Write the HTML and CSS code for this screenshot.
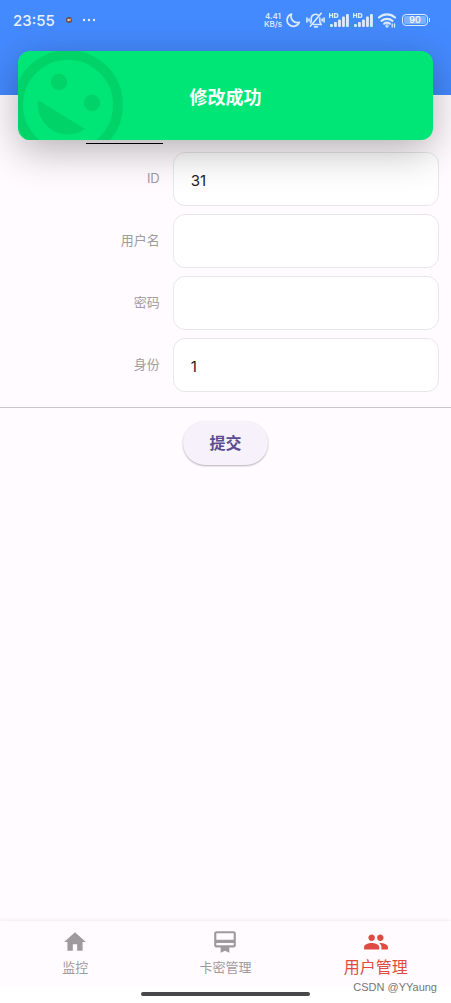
FILE: index.html
```html
<!DOCTYPE html>
<html lang="zh-CN">
<head>
<meta charset="utf-8">
<meta name="viewport" content="width=device-width, initial-scale=1">
<title>用户管理</title>
<link rel="stylesheet" href="styles.css">
</head>
<body>
<div class="app">
  <header class="app-header">
    <div class="status-bar">
      <time class="clock">23:55</time>
      <svg class="app-dot" width="8" height="8" viewBox="0 0 8 8"><circle cx="4" cy="4" r="3" fill="#6b4a4f"/><circle cx="3.6" cy="4" r="1.3" fill="#f0cfc0"/><path d="M5 2l1.500 1.500-1.500 2z" fill="#e8913a"/></svg>
      <svg class="more" width="14" height="4" viewBox="0 0 14 4" fill="#e8f2ff"><circle cx="2" cy="2" r="1.200"/><circle cx="7" cy="2" r="1.200"/><circle cx="12" cy="2" r="1.200"/></svg>
      <div class="status-icons">
        <div class="speed"><span>4.41</span><span>KB/s</span></div>
        <svg width="16" height="18" viewBox="0 0 16 18" fill="none" stroke="#dcecff" stroke-width="1.700" stroke-linejoin="round"><path d="M5.500 3A6.300 6.300 0 1 0 13.300 11.200 6.200 6.200 0 0 1 5.500 3z"/></svg>
        <svg width="19" height="18" viewBox="0 0 20 18" fill="none" stroke="#dcecff" stroke-width="1.700" stroke-linecap="round" stroke-linejoin="round"><path d="M14.500 7v4l1.500 2.800H8M4.800 12l.7-1.500V7.500a4.600 4.600 0 0 1 7.400-3.600M9 16.200h3M16 2L4.500 15.500M1 7v4M3.200 8v2M19 7v4M17 8v2"/></svg>
        <svg width="20" height="18" viewBox="0 0 20 18" fill="#dcecff"><path d="M0 2h1.200v1.800h1.800V2h1.200v5H3V5H1.200v2H0zM5 2h2q2.500 0 2.500 2.500T7 7H5zm1.200 1.200v2.600H7q1.200 0 1.200-1.300T7 3.200z" fill-rule="evenodd"/><rect x="1" y="13" width="2.900" height="3" rx="1"/><rect x="5" y="11" width="2.900" height="5" rx="1"/><rect x="9" y="8.500" width="2.900" height="7.500" rx="1"/><rect x="13" y="5.500" width="2.900" height="10.500" rx="1"/><rect x="17" y="3" width="2.900" height="13" rx="1"/></svg>
        <svg width="20" height="18" viewBox="0 0 20 18" fill="#dcecff"><path d="M0 2h1.200v1.800h1.800V2h1.200v5H3V5H1.200v2H0zM5 2h2q2.500 0 2.500 2.500T7 7H5zm1.200 1.200v2.600H7q1.200 0 1.200-1.300T7 3.200z" fill-rule="evenodd"/><rect x="1" y="13" width="2.900" height="3" rx="1"/><rect x="5" y="11" width="2.900" height="5" rx="1"/><rect x="9" y="8.500" width="2.900" height="7.500" rx="1"/><rect x="13" y="5.500" width="2.900" height="10.500" rx="1"/><rect x="17" y="3" width="2.900" height="13" rx="1"/></svg>
        <svg width="20" height="18" viewBox="0 0 20 18" fill="none" stroke="#dcecff" stroke-width="2.200" stroke-linecap="round"><path d="M2 6.500a12 12 0 0 1 16 0M4.500 9.800a8.500 8.500 0 0 1 11 0M7.200 12.700a4.500 4.500 0 0 1 5.600 0"/><circle cx="10" cy="15" r=".6"/><path d="M15.200 13v3M17.500 13v3" stroke-width="1.300"/></svg>
        <div class="battery"><span>90</span></div>
      </div>
    </div>
  </header>

  <main class="content">
    <div class="tab-strip"><span class="tab-indicator"></span></div>
    <form class="user-form">
      <div class="fields">
        <div class="field"><label for="uid">ID</label><input id="uid" type="text" value="31"></div>
        <div class="field"><label for="username">用户名</label><input id="username" type="text"></div>
        <div class="field"><label for="password">密码</label><input id="password" type="password"></div>
        <div class="field"><label for="role">身份</label><input id="role" type="text" value="1"></div>
      </div>
      <div class="actions"><button class="submit" type="button">提交</button></div>
    </form>
  </main>

  <nav class="bottom-nav">
    <a class="nav-item" href="#monitor">
      <svg width="26" height="26" viewBox="0 0 24 24" fill="currentColor"><path d="M10 20v-6h4v6h5v-8h3L12 3 2 12h3v8z"/></svg>
      <span>监控</span>
    </a>
    <a class="nav-item" href="#cards">
      <svg width="26" height="26" viewBox="0 0 24 24" fill="currentColor"><path d="M20 2H4c-1.110 0-2 .89-2 2v11c0 1.110.89 2 2 2h4v5l4-2 4 2v-5h4c1.110 0 2-.89 2-2V4c0-1.110-.89-2-2-2zm0 13H4v-2h16v2zm0-5H4V4h16v6z"/></svg>
      <span>卡密管理</span>
    </a>
    <a class="nav-item active" href="#users">
      <svg width="26" height="26" viewBox="0 0 24 24" fill="currentColor"><path d="M16 11c1.660 0 2.990-1.340 2.990-3S17.660 5 16 5s-3 1.340-3 3 1.340 3 3 3zm-8 0c1.660 0 2.990-1.340 2.990-3S9.660 5 8 5 5 6.340 5 8s1.340 3 3 3zm0 2c-2.330 0-7 1.170-7 3.500V19h14v-2.500c0-2.330-4.670-3.500-7-3.500zm8 0c-.29 0-.62.02-.97.05 1.160.84 1.970 1.970 1.970 3.450V19h6v-2.500c0-2.330-4.670-3.500-7-3.500z"/></svg>
      <span>用户管理</span>
    </a>
  </nav>
  <div class="gesture-area"><span class="gesture-bar"></span></div>

  <div class="toast" role="status">
    <svg class="toast-face" width="110" height="89" viewBox="0 0 110 89" fill="#00d468"><circle cx="50" cy="54" r="50" fill="none" stroke="#00d468" stroke-width="10"/><circle cx="41" cy="31" r="8.300"/><circle cx="74" cy="52" r="8.300"/><path d="M20 49L67 78A30 30 0 0 1 20 49z"/></svg>
    <span>修改成功</span>
  </div>
  <span class="watermark">CSDN @YYaung</span>
</div>
</body>
</html>
```

FILE: styles.css
```css
* { box-sizing: border-box; }

body {
  margin: 0;
  font-family: Inter, "Noto Sans CJK SC", sans-serif;
  background: #fffbff;
}

.app {
  position: relative;
  min-height: 100vh;
  display: flex;
  flex-direction: column;
}

.app-header {
  height: 95px;
  background: #448aff;
}

.status-bar {
  display: flex;
  align-items: center;
  height: 40px;
  padding: 0 23px 0 13px;
  color: #e8f2ff;
}

.clock {
  font-size: 15px;
  font-weight: 500;
}

.app-dot { margin-left: 10px; }
.more { margin-left: 9px; }

.status-icons {
  display: flex;
  align-items: center;
  gap: 4px;
  margin-left: auto;
}

.speed {
  display: flex;
  flex-direction: column;
  align-items: center;
  font-size: 8px;
  font-weight: 500;
  line-height: 8px;
}

.battery {
  position: relative;
  width: 26px;
  height: 12px;
  margin-left: 1px;
  padding: 1px;
  border: 1px solid #dcecff;
  border-radius: 4px;
}

.battery span {
  display: block;
  border-radius: 2px;
  background: #7fb2ff;
  color: #fff;
  font-size: 9px;
  font-weight: 500;
  line-height: 8px;
  text-align: center;
}

.battery::after {
  content: "";
  position: absolute;
  top: 3px;
  right: -3px;
  width: 1px;
  height: 4px;
  background: #dcecff;
}

.content { flex: 1; }

.tab-strip {
  display: flex;
  align-items: flex-end;
  height: 49px;
  padding-left: 19%;
}

.tab-indicator {
  width: 77px;
  height: 1px;
  background: #000;
}

.fields {
  display: flex;
  flex-direction: column;
  gap: 8px;
  padding: 8px 12px 15px 0;
  border-bottom: 1px solid #cac4cb;
}

.field {
  display: grid;
  grid-template-columns: 3fr 5fr;
  gap: 13px;
  align-items: center;
}

.field label {
  padding-bottom: 2px;
  color: #a09ba0;
  font-size: 13px;
  line-height: 18px;
  text-align: right;
}

.field input {
  width: 100%;
  height: 54px;
  padding: 3px 17px 0;
  border: 1px solid #e9e6ea;
  border-radius: 12px;
  background: #fff;
  color: #1c1b1f;
  font: inherit;
  font-size: 15px;
  outline: 0;
}

.actions {
  display: flex;
  justify-content: center;
  padding-top: 13px;
}

.submit {
  height: 44px;
  padding: 0 26px 2px;
  border: 0;
  border-radius: 22px;
  background: #f6f1fa;
  box-shadow: 0 1px 2px rgba(0, 0, 0, 0.3);
  color: #5c4d91;
  font: inherit;
  font-size: 16px;
  font-weight: 600;
}

.bottom-nav {
  display: grid;
  grid-template-columns: repeat(3, 1fr);
  height: 66px;
  box-shadow: 0 0 4px rgba(0, 0, 0, 0.1);
}

.nav-item {
  display: flex;
  flex-direction: column;
  align-items: center;
  gap: 2px;
  padding-top: 8px;
  color: #9e9a9e;
  font-size: 13px;
  line-height: 20px;
  text-decoration: none;
}

.nav-item.active {
  color: #df4b40;
  font-size: 16px;
}

.gesture-area {
  position: relative;
  display: flex;
  justify-content: center;
  height: 16px;
  padding-top: 5px;
  background: #fff;
}

.gesture-bar {
  width: 169px;
  height: 4px;
  border-radius: 2px;
  background: #474648;
}

.toast {
  position: absolute;
  top: 51px;
  left: 18px;
  right: 18px;
  height: 89px;
  display: flex;
  align-items: center;
  justify-content: center;
  border-radius: 12px;
  background: #00e676;
  box-shadow: 0 10px 40px rgba(0, 0, 0, 0.3);
  color: #fff;
  font-size: 18px;
  font-weight: 600;
}

.toast-face {
  position: absolute;
  top: 0;
  left: 0;
  border-radius: 12px 0 0 12px;
}

.toast span { position: relative; }

.watermark {
  position: absolute;
  right: 14px;
  bottom: 8px;
  color: #777;
  font-family: "Liberation Sans", sans-serif;
  font-size: 11px;
  line-height: 16px;
}
```
